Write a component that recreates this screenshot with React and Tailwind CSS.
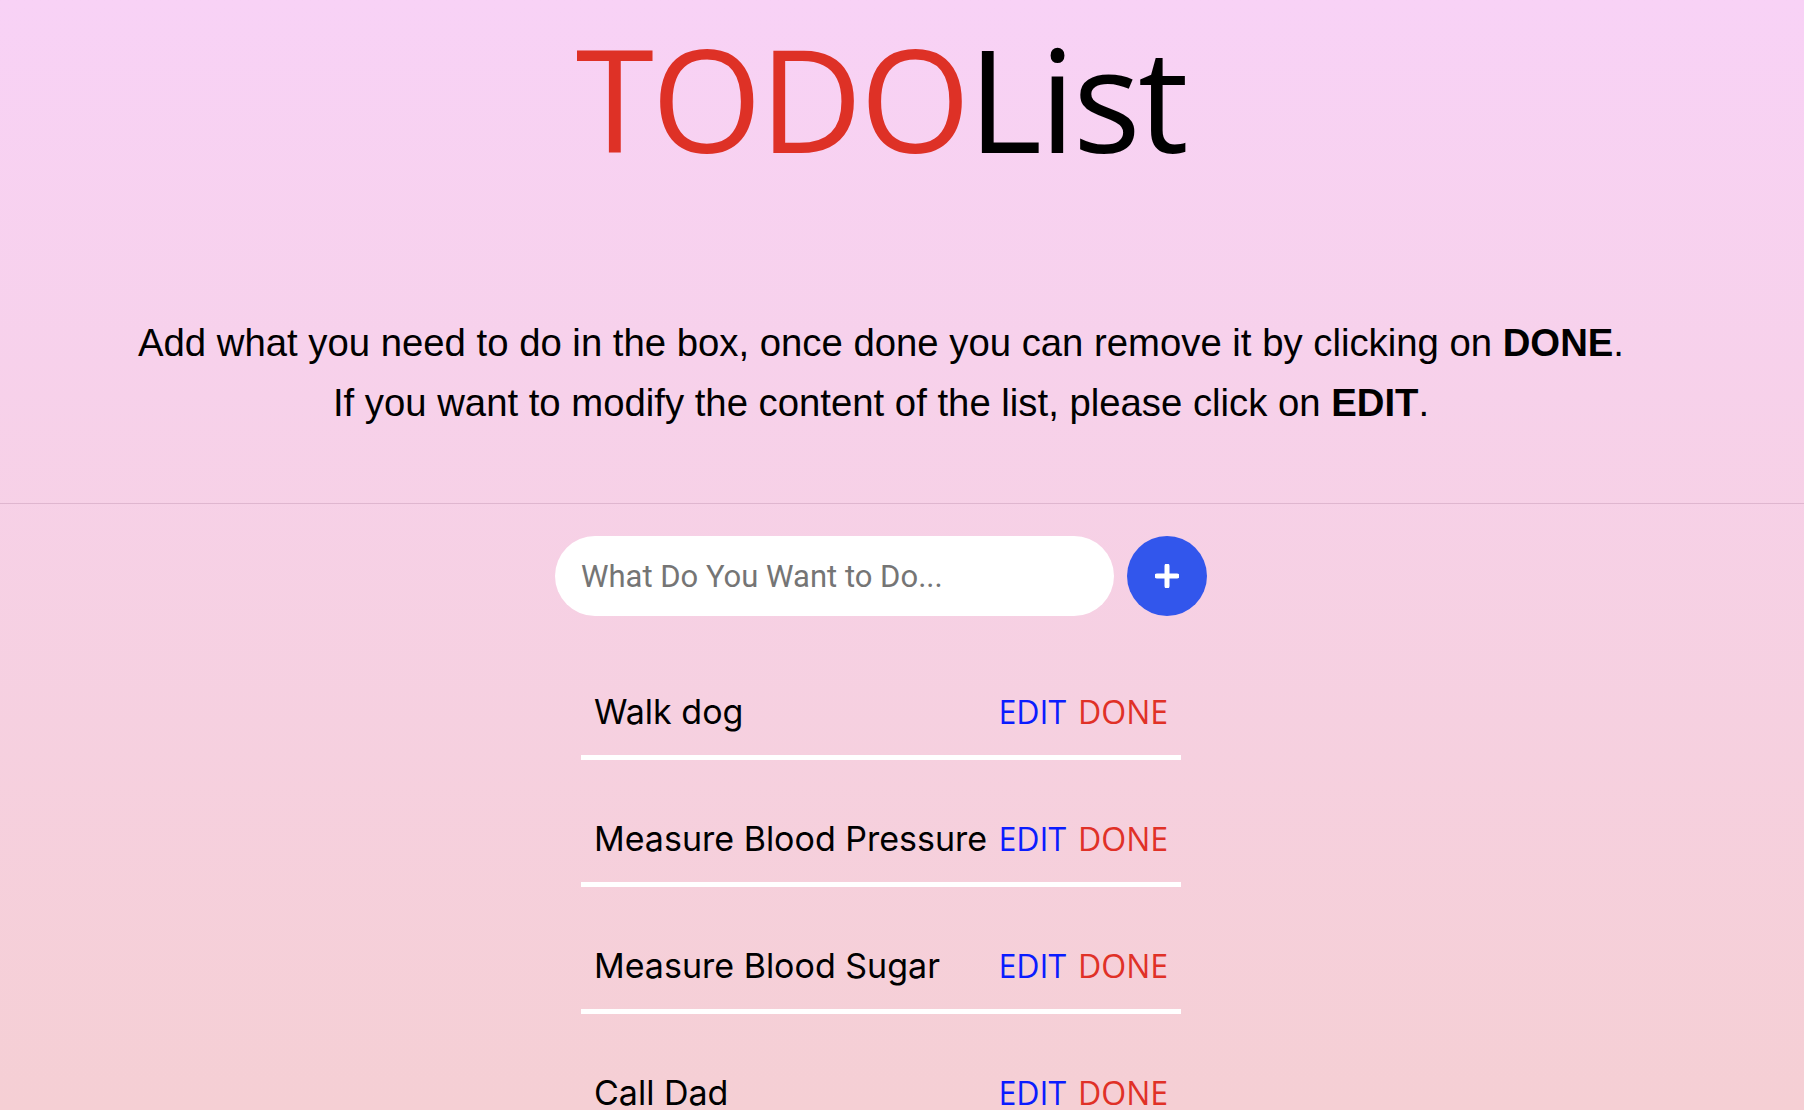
import { useState } from "react";

const initialTodos = [
  { id: 1, text: "Walk dog" },
  { id: 2, text: "Measure Blood Pressure" },
  { id: 3, text: "Measure Blood Sugar" },
  { id: 4, text: "Call Dad" },
];

function TodoItem({ todo, onDone }) {
  return (
    <li className="w-[600px] px-[13px] pb-[23px] mb-[59px] border-b-[5px] border-white flex items-center justify-between">
      <span className="text-[34px] leading-[40px] text-black font-['Inter',sans-serif]">
        {todo.text}
      </span>
      <span className="flex gap-[12px] text-[32px] leading-[40px] font-['Open_Sans',sans-serif]">
        <button className="text-[#0a1cff]">EDIT</button>
        <button className="text-[#e03127]" onClick={() => onDone(todo.id)}>
          DONE
        </button>
      </span>
    </li>
  );
}

export default function App() {
  const [todos, setTodos] = useState(initialTodos);
  const [value, setValue] = useState("");

  const addTodo = () => {
    if (!value.trim()) return;
    setTodos((prev) => [...prev, { id: Date.now(), text: value }]);
    setValue("");
  };

  return (
    <div className="h-screen overflow-hidden bg-gradient-to-b from-[#f8d2f6] to-[#f5cfd4]">
      <header className="border-b border-[#dfb6cf] pb-[70px]">
        <div className="pr-[42px] text-center">
          <h1 className="pt-[20px] text-[142px] leading-[1.1] font-medium tracking-[-2.5px] font-['Open_Sans',sans-serif]">
            <span className="text-[#de3126]">TODO</span>
            <span className="text-black">List</span>
          </h1>
          <div className="mt-[137px] text-[38.3px] leading-[60px] text-black font-['Liberation_Sans',sans-serif]">
            <p>
              Add what you need to do in the box, once done you can remove it by clicking on{" "}
              <b>DONE</b>.
            </p>
            <p>
              If you want to modify the content of the list, please click on <b>EDIT</b>.
            </p>
          </div>
        </div>
      </header>

      <main className="pr-[42px] flex flex-col items-center">
        <div className="mt-[32px] flex gap-[13px]">
          <input
            value={value}
            onChange={(e) => setValue(e.target.value)}
            placeholder="What Do You Want to Do..."
            className="w-[559px] h-[80px] rounded-full bg-white px-[26px] text-[31px] outline-none placeholder:text-[#757575] font-['Roboto',sans-serif]"
          />
          <button
            onClick={addTodo}
            className="w-[80px] h-[80px] rounded-full bg-[#3256ec] flex items-center justify-center"
          >
            <svg width="24" height="24" viewBox="0 0 24 24">
              <path d="M12 2v20M2 12h20" stroke="white" strokeWidth="5" strokeLinecap="round" />
            </svg>
          </button>
        </div>

        <ul className="mt-[76px]">
          {todos.map((todo) => (
            <TodoItem
              key={todo.id}
              todo={todo}
              onDone={(id) => setTodos((prev) => prev.filter((t) => t.id !== id))}
            />
          ))}
        </ul>
      </main>
    </div>
  );
}
